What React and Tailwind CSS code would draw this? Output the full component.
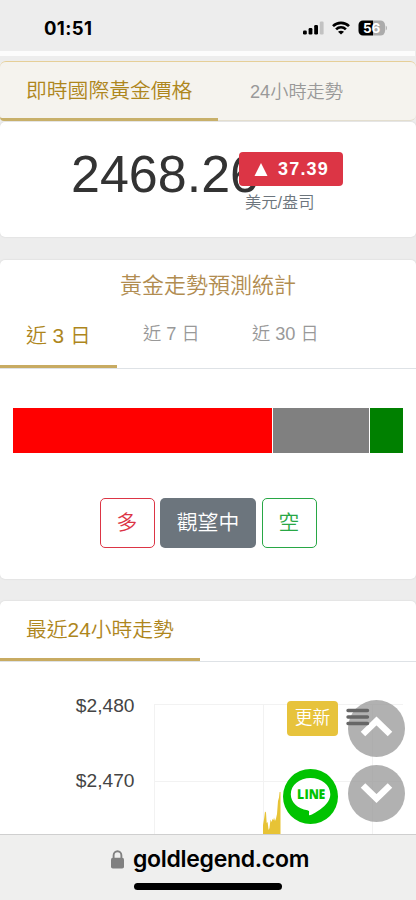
import React from "react";

function StatusBar() {
  return (
    <header className="flex h-[51px] items-center justify-between bg-[#ededed] pl-[44px] pr-[29px] pt-[4px]">
      <span className="font-['Inter'] text-[18.5px] font-bold leading-6 tracking-[0.4px] text-black">01:51</span>
      <div className="flex items-center">
        <svg width="21" height="14" viewBox="0 0 21 14">
          <rect x="0" y="9.5" width="3.8" height="4" rx="1.2" />
          <rect x="5.6" y="7" width="3.8" height="6.500" rx="1.2" />
          <rect x="11.2" y="4" width="3.8" height="9.500" rx="1.2" />
          <rect x="16.8" y="0.5" width="3.800" height="13" rx="1.2" fill="#c2c2c2" />
        </svg>
        <svg className="ml-2" width="18" height="14" viewBox="0 0 18 14" fill="none" stroke="#000" strokeWidth="2.6">
          <path d="M1 5.2C5.4 .7 12.6 .7 17 5.2" />
          <path d="M4.1 8.4c2.7-2.8 7.1-2.8 9.8 0" />
          <path d="M9 13.6 6 10.8c1.7-1.5 4.3-1.5 6 0z" fill="#000" stroke="none" />
        </svg>
        <svg className="ml-2" width="29" height="16" viewBox="0 0 29 16">
          <path d="M15 0.5H5A4.5 4.5 0 0 0 .5 5v6A4.5 4.5 0 0 0 5 15.500h10z" />
          <path d="M15 .5h7.500a4.500 4.500 0 0 1 4.500 4.500v6a4.500 4.500 0 0 1-4.500 4.500H15z" fill="#ababab" />
          <path d="M27.700 5.500c1.600.8 1.600 4.200 0 5z" fill="#ababab" />
          <text x="13.700" y="12.800" textAnchor="middle" fill="#fff" fontFamily="Inter" fontWeight="700" fontSize="13.500">56</text>
        </svg>
      </div>
    </header>
  );
}

function PriceCard() {
  return (
    <section className="flex h-[115px] rounded-[5px] bg-white pl-[71px] shadow-[0_0_2px_rgba(0,0,0,0.12)]">
      <div className="mt-[22px] w-[168px] whitespace-nowrap text-[52px] leading-[60px] text-[#333]">2468.26</div>
      <div className="relative mt-[30px]">
        <div className="flex h-[34px] w-[104px] items-center rounded-[4px] bg-[#dc3545] pl-[15px] text-white">
          <svg width="14" height="13" viewBox="0 0 14 13"><path d="M7 0 13.500 13H.5z" fill="#fff" /></svg>
          <span className="ml-[10px] text-[18px] font-bold leading-6 tracking-[1.2px]">37.39</span>
        </div>
        <div className="ml-[6px] mt-[4px] text-[16.3px] leading-6 text-[#6c757d]">美元/盎司</div>
      </div>
    </section>
  );
}

function ForecastCard() {
  return (
    <section className="mt-[23px] h-[319px] rounded-[5px] bg-white shadow-[0_0_2px_rgba(0,0,0,0.12)]">
      <h2 className="pt-[10px] text-center text-[22px] leading-8 text-[#b18c50]">黃金走勢預測統計</h2>
      <nav className="flex h-[67px] border-b border-[#dee2e6] text-[18.2px] text-[#999]">
        <div className="h-[66px] w-[117px] border-b-[3px] border-[#c8ab62] pl-[26px] pt-[18px] text-[20.8px] leading-8 text-[#ae861c]">近 3 日</div>
        <div className="w-[109px] pl-[26px] pt-[16px] leading-8">近 7 日</div>
        <div className="pl-[26px] pt-[16px] leading-8">近 30 日</div>
      </nav>
      <div className="mx-[13px] mt-[39px] flex h-[45px] gap-px">
        <div className="w-[259px] bg-[#ff0000]" />
        <div className="w-[96px] bg-[#808080]" />
        <div className="w-[33px] bg-[#008000]" />
      </div>
      <div className="mt-[45px] flex justify-center gap-[5.500px] text-[20.8px] leading-[46px]">
        <button className="h-[50px] w-[55px] rounded-[5px] border border-[#dc3545] text-[#dc3545]">多</button>
        <button className="h-[50px] w-[96px] rounded-[5px] bg-[#6c757d] text-white">觀望中</button>
        <button className="h-[50px] w-[55px] rounded-[5px] border border-[#28a745] text-[#28a745]">空</button>
      </div>
    </section>
  );
}

function Chart() {
  return (
    <svg className="block" width="416" height="172" viewBox="0 662 416 172">
      <g stroke="#f2f2f2" strokeWidth="1" fill="none">
        <path d="M154 704.500H403M154 781.500H403M154.500 704V834M263.500 704V834M372.500 704V834" />
      </g>
      <path d="M263 834V825L264.200 818 265 811.500 266 812.500 266.700 823 267.600 822 268.600 830 269.500 828 270.500 819.500 271.500 822 272.500 819 273.500 820 274 817.500 275 821 276 818.500 277 814 278 801 279 797.500 279.600 792 280.500 792V834Z" fill="#e7c336" />
      <g fill="#444" fontSize="19.200" textAnchor="end">
        <text x="134.500" y="712">$2,480</text>
        <text x="134.500" y="787">$2,470</text>
      </g>
    </svg>
  );
}

function ScrollButton({ down }) {
  return (
    <button className="block size-[57px]">
      <svg width="57" height="57" viewBox="0 0 57 57">
        <circle cx="28.500" cy="28.500" r="28.500" fill="#999" fillOpacity="0.760" />
        <path d={down ? "M15 20.500 28.500 33.500 42 20.500" : "M15 34 28.500 21 42 34"} fill="none" stroke="#fff" strokeWidth="6.500" />
      </svg>
    </button>
  );
}

function FloatingControls() {
  return (
    <>
      <button className="absolute left-[287px] top-[100px] h-[35px] w-[51px] rounded-[4px] bg-[#e7c33c] pb-[2px] text-[17.8px] leading-8 text-white">更新</button>
      <div className="absolute left-[283px] top-[168px]">
        <svg width="55" height="55" viewBox="0 0 55 55">
          <circle cx="27.500" cy="27.500" r="27.500" fill="#00c300" />
          <path d="M27.500 9C16.500 9 7.800 16.200 7.800 25.200c0 8 7 14.700 16.600 16 2 .3 1.900 1.500 1.600 3.300-.3 1.800.5 2.200 2.300 1.300C34 42.800 47.300 35.500 47.300 25.200 47.300 16.200 38.500 9 27.500 9z" fill="#fff" />
          <text x="14" y="30.300" fill="#00c300" fontFamily="Open Sans" fontWeight="800" fontSize="13.600" textRendering="geometricPrecision" transform="translate(14 0) scale(0.900 1) translate(-14 0)">
            <tspan x="14">L</tspan>
            <tspan x="22.300">I</tspan>
            <tspan x="27.200">N</tspan>
            <tspan x="38">E</tspan>
          </text>
        </svg>
      </div>
      <div className="absolute right-[11px] top-[99px] flex flex-col gap-[8px]">
        <ScrollButton />
        <ScrollButton down />
      </div>
      <svg className="absolute left-[346px] top-[106px]" width="24" height="19" viewBox="0 0 24 19" stroke="#666" strokeWidth="3.400" strokeLinecap="round">
        <path d="M2 3.500H21.500M2 10H21.500M2 16.500H21.500" />
      </svg>
    </>
  );
}

function TrendCard() {
  return (
    <section className="relative mt-[22px] h-[233px] rounded-t-[5px] bg-white shadow-[0_0_2px_rgba(0,0,0,0.12)]">
      <div className="h-[61px] border-b border-[#dee2e6]">
        <h2 className="h-[60px] w-[200px] border-b-[3px] border-[#c8ab62] pl-[26px] pt-[13px] text-[20.8px] leading-8 text-[#ae861c]">最近24小時走勢</h2>
      </div>
      <Chart />
      <FloatingControls />
    </section>
  );
}

function AddressBar() {
  return (
    <footer className="relative h-[66px] border-t border-[#cfcfcf] bg-[#efefee]">
      <div className="flex items-center pl-[110px] pt-[9px]">
        <svg width="15" height="19" viewBox="0 0 15 19">
          <path d="M3.600 9V5.400a3.900 4.200 0 0 1 7.800 0V9" fill="none" stroke="#808080" strokeWidth="1.900" />
          <rect x="1" y="7.800" width="13" height="10.700" rx="1.800" fill="#808080" />
        </svg>
        <span className="ml-[8px] font-['Inter'] text-[23px] font-semibold leading-[30px] tracking-[-0.3px] text-black">goldlegend.com</span>
      </div>
      <div className="ml-[134px] mt-[9px] h-[7px] w-[148px] rounded-full bg-black" />
    </footer>
  );
}

export default function App() {
  return (
    <div className="h-[900px] w-[416px] overflow-hidden bg-[#ededed] font-['Liberation_Sans','Noto_Sans_CJK_TC',sans-serif] font-[350]">
      <StatusBar />
      <div className="mr-px h-[5px] bg-[#fcfcfc]" />
      <nav className="mt-[5px] flex h-[60px] rounded-[6px] border-y border-t-[#e6cf98] border-b-[#e4dfd0] bg-[#f5f3ee]">
        <div className="h-[59px] w-[218px] rounded-bl-[4px] border-b-[3px] border-[#c8b06a] pl-[26px] pt-[13px] text-[20.8px] leading-8 text-[#ae861c]">即時國際黃金價格</div>
        <div className="pl-[32px] pt-[14px] text-[18.2px] leading-8 text-[#999]">24小時走勢</div>
      </nav>
      <div className="pt-px">
        <PriceCard />
      </div>
      <ForecastCard />
      <TrendCard />
      <AddressBar />
    </div>
  );
}
